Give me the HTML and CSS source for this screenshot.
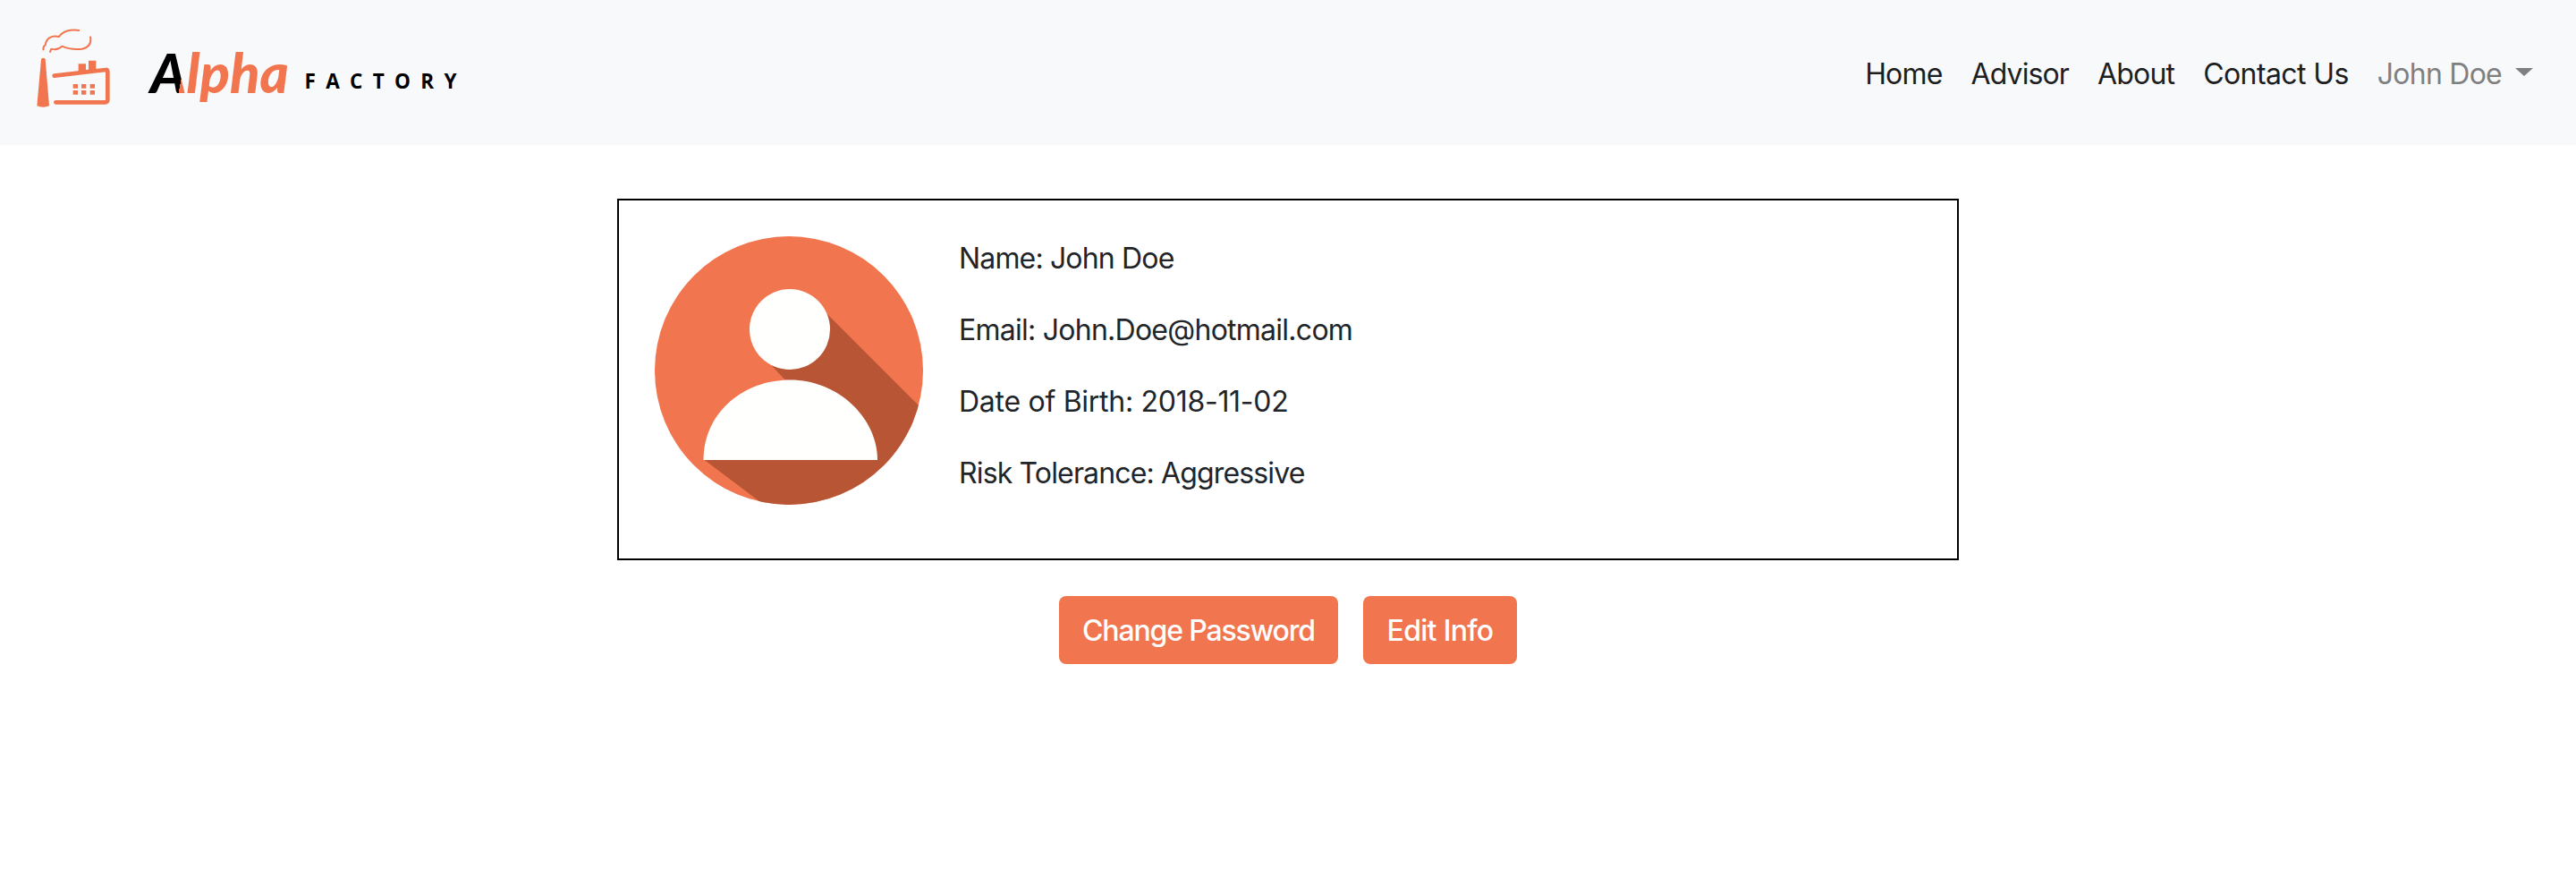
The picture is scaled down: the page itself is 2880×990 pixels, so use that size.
FILE: index.html
```html
<!DOCTYPE html>
<html lang="en">
<head>
<meta charset="utf-8">
<title>Alpha Factory</title>
<link rel="stylesheet" href="styles.css">
</head>
<body>
<header class="navbar">
  <a class="brand">
    <svg class="brand-icon" viewBox="0 0 390 390" aria-hidden="true">
      <g fill="#f1764f">
        <path d="M78 169q0-5 7-5t7 5l13 156q-20 8-41 0z"/>
        <path d="M203 184h25v20l9-1v-30h25v30l-20 5-39 5z"/>
        <path d="M185 252h16v14h-16zM213 252h16v14h-16zM242 252h16v14h-16zM185 273h16v14h-16zM213 273h16v14h-16zM242 273h16v14h-16z"/>
      </g>
      <g fill="none" stroke="#f1764f" stroke-linecap="round" stroke-linejoin="round">
        <path stroke-width="14" d="M122 224L294 204Q301 203 301 210V304Q301 313 292 313H127"/>
        <path stroke-width="6" stroke-linecap="butt" d="M86 139Q83 126 92 121C95 97 113 88 138 93C150 74 177 67 207 72"/>
        <path stroke-width="6" stroke-linecap="butt" d="M243 92C248 119 235 130 215 134C190 137 164 132 148 125C136 137 125 138 112 134L107 146"/>
      </g>
    </svg>
    <svg class="brand-name" viewBox="0 0 400 110">
      <defs>
        <linearGradient id="two-tone" gradientUnits="userSpaceOnUse" x1="44" y1="50" x2="64" y2="54">
          <stop offset=".5" stop-color="#000"/><stop offset=".5" stop-color="#f1764f"/>
        </linearGradient>
      </defs>
      <text class="alpha" x="18" y="74" textLength="155" lengthAdjust="spacingAndGlyphs" fill="url(#two-tone)">Alpha</text>
      <text class="factory" x="190.500" y="69" textLength="170">FACTORY</text>
    </svg>
  </a>
  <nav class="links">
    <a class="home">Home</a>
    <a class="advisor">Advisor</a>
    <a class="about">About</a>
    <a class="contact">Contact Us</a>
    <a class="user"><span>John Doe</span><i class="caret"></i></a>
  </nav>
</header>
<main class="page">
  <section class="card">
    <svg class="avatar" viewBox="0 0 300 300" aria-hidden="true">
      <clipPath id="disc"><circle cx="150" cy="150" r="150"/></clipPath>
      <g clip-path="url(#disc)">
        <rect width="300" height="300" fill="#f1764f"/>
        <path fill="#b85535" d="M193 87L300 194V300H122L55 249.500L155 170L130 144L150 100z"/>
        <path fill="#f1764f" d="M130 144L160 182L55 249L90 170z"/>
      </g>
      <circle cx="151" cy="104" r="45" fill="#fffffd"/>
      <path fill="#fffffd" d="M54.500 250C54.500 198 98 160.500 151.500 160.500S249 203 249 250z"/>
    </svg>
    <div class="details">
      <p class="name">Name: John Doe</p>
      <p class="email">Email: John.Doe@hotmail.com</p>
      <p class="birth">Date of Birth: 2018-11-02</p>
      <p class="risk">Risk Tolerance: Aggressive</p>
    </div>
  </section>
  <div class="actions">
    <button class="btn change">Change Password</button>
    <button class="btn edit">Edit Info</button>
  </div>
</main>
</body>
</html>
```
FILE: styles.css
```css
* { box-sizing: border-box; }
body {
  margin: 0;
  background: #fff;
  color: #212529;
  font: 32px/48px Inter, "Liberation Sans", sans-serif;
}
.navbar {
  display: flex;
  justify-content: space-between;
  height: 162px;
  padding: 10px 48px 0 20px;
  background: #f8f9fb;
}
.brand { display: flex; }
.brand-icon { width: 130px; height: 130px; }
.brand-name { width: 400px; height: 110px; margin-top: 20px; }
.alpha { font: italic 900 60px Lato, sans-serif; }
.factory { font: 700 22.5px "Open Sans", sans-serif; fill: #000; }
.links { display: flex; gap: 32px; padding-top: 49px; color: #1e1e1f; }
.home { letter-spacing: -.8px; }
.advisor { letter-spacing: -.9px; }
.about { letter-spacing: -.8px; }
.contact { letter-spacing: -.6px; }
.user { display: flex; letter-spacing: -.75px; color: #7f8080; }
.caret {
  width: 0;
  height: 0;
  margin: 17px 0 0 15px;
  border: 10px solid transparent;
  border-top: 9px solid #7f8080;
  border-bottom: 0;
}
.page { display: flex; flex-direction: column; align-items: center; padding-top: 60px; }
.card {
  display: flex;
  gap: 40px;
  width: 1500px;
  height: 404px;
  padding: 40px;
  border: 2px solid #000;
}
.avatar { width: 300px; height: 300px; }
.details { padding-top: 1px; }
.details p { margin: 0 0 32px; }
.name { letter-spacing: -.84px; }
.email { letter-spacing: -.74px; }
.birth { letter-spacing: -.28px; }
.risk { letter-spacing: -.85px; }
.actions { display: flex; gap: 28px; padding-top: 40px; }
.btn {
  height: 76px;
  padding: 2px 0 0;
  border: 0;
  border-radius: 8px;
  background: #f1764f;
  color: #fff;
  font: 500 32px/48px Inter, sans-serif;
}
.change { width: 312px; letter-spacing: -1.15px; }
.edit { width: 172px; letter-spacing: -.7px; }
```
